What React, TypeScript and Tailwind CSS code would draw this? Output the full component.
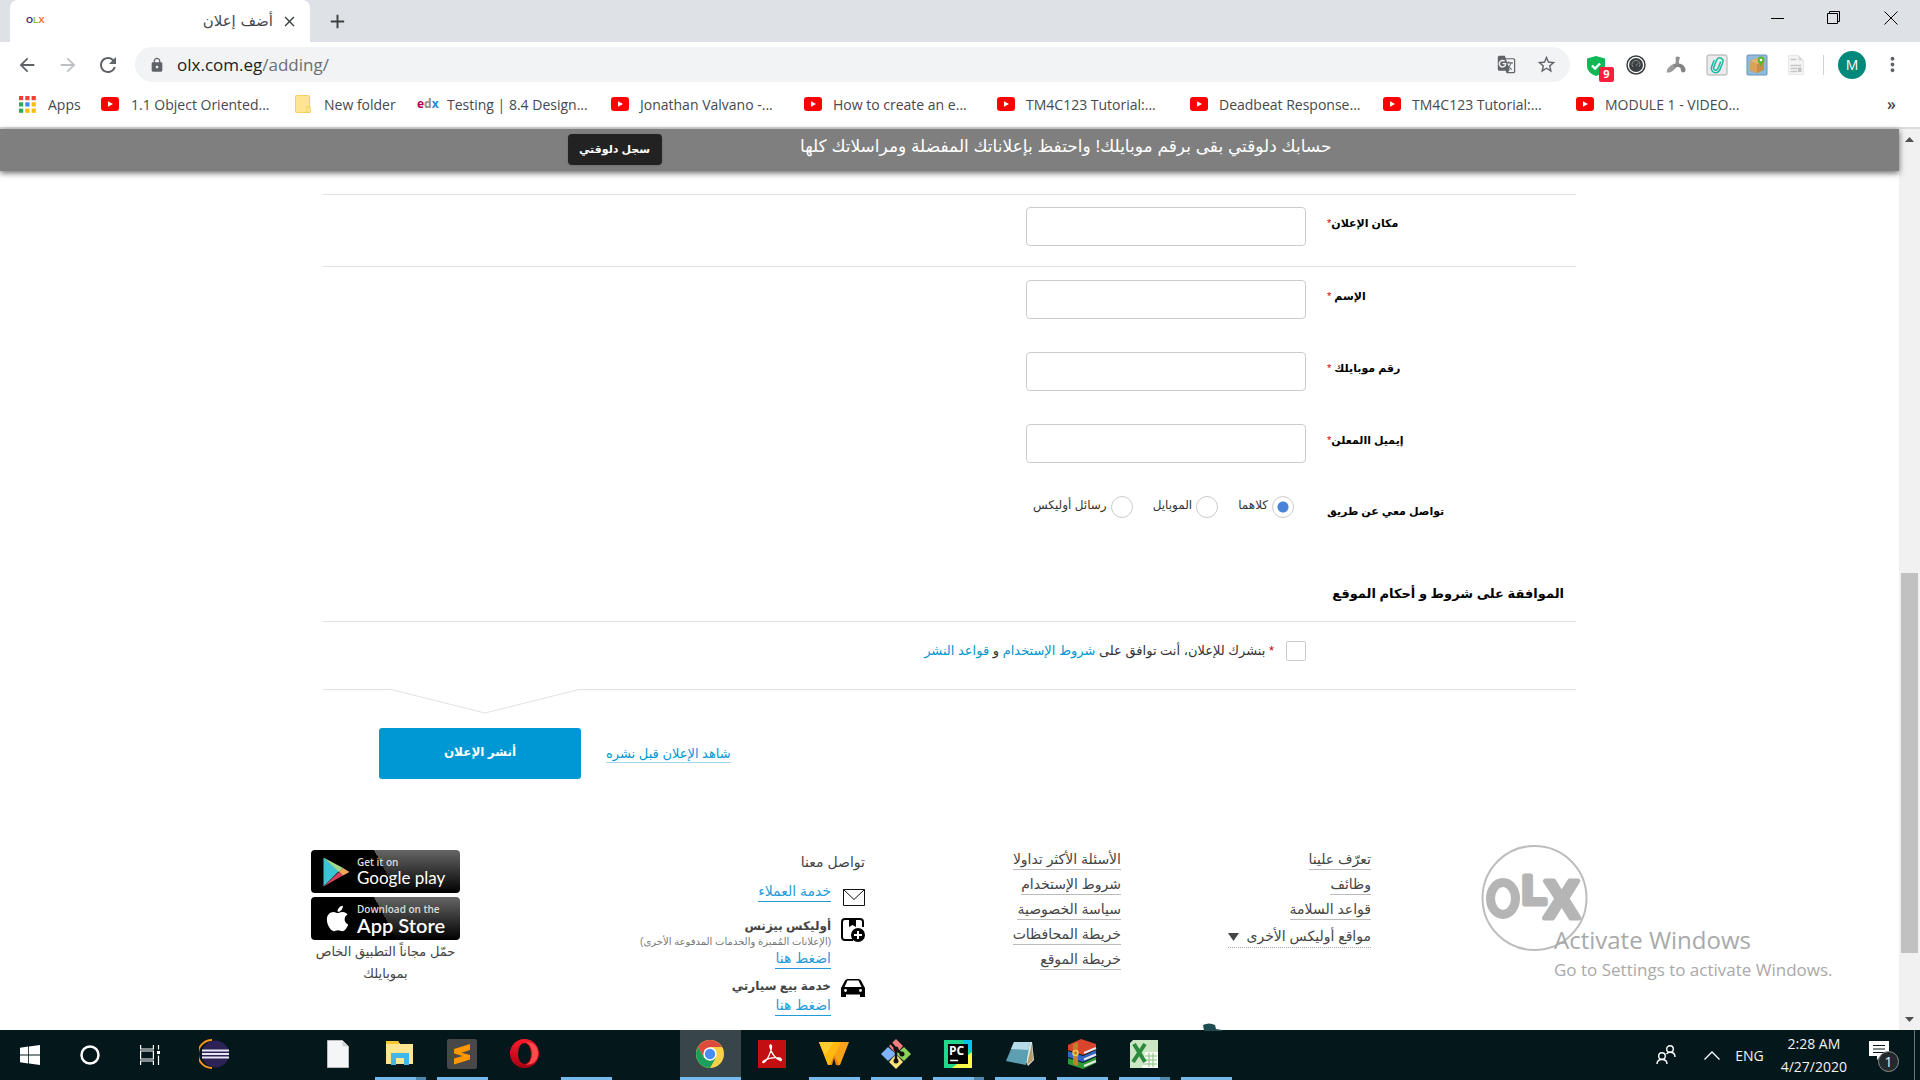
import React, { useState } from "react";
import {
  MdArrowBack,
  MdArrowForward,
  MdRefresh,
  MdLock,
  MdStarBorder,
  MdGTranslate,
  MdMoreVert,
  MdClose,
  MdAdd,
} from "react-icons/md";
import { FaApple } from "react-icons/fa";

const uiFont = "font-['Open_Sans','Noto_Sans',sans-serif]";
const pageFont = "font-['Liberation_Sans','DejaVu_Sans',sans-serif]";

function YouTubeIcon() {
  return (
    <svg width="18" height="14" viewBox="0 0 18 14" className="shrink-0">
      <rect width="18" height="14" rx="3" fill="#ff0000" />
      <path d="M7 4.2v5.6L12 7z" fill="#fff" />
    </svg>
  );
}

function AppsIcon() {
  const colors = ["#ea4335", "#ea4335", "#ea4335", "#34a853", "#4285f4", "#fbbc05", "#34a853", "#fbbc05", "#fbbc05"];
  return (
    <svg width="17" height="17" viewBox="0 0 17 17" className="shrink-0">
      {colors.map((c, i) => (
        <rect key={i} x={(i % 3) * 6.3} y={Math.floor(i / 3) * 6.3} width="4.2" height="4.2" fill={c} />
      ))}
    </svg>
  );
}

function FolderIcon() {
  return (
    <svg width="16" height="18" viewBox="0 0 16 18" className="shrink-0">
      <rect x="0.5" y="0.5" width="14" height="17" rx="1" fill="#ffe591" stroke="#f3cf63" />
      <path d="M12 11.5h3.2v6H12z" fill="#ffe591" stroke="#f3cf63" />
    </svg>
  );
}

function EdxIcon() {
  return (
    <span className="w-[20px] shrink-0 text-[12px] leading-none font-bold">
      <span className="text-[#b5005b]">e</span>
      <span className="text-[#8b8b8b]">d</span>
      <span className="text-[#1a8fe0]">x</span>
    </span>
  );
}

function TabStrip() {
  return (
    <div className="flex h-[42px] items-stretch bg-[#dee1e6]">
      <div className="ml-[10px] flex w-[300px] items-center rounded-t-lg bg-white pr-[10px] pl-4">
        <span className="font-['Liberation_Sans',sans-serif] text-[9px] font-extrabold">
          <span className="text-[#4b1a82]">O</span>
          <span className="text-[#8cc43f]">L</span>
          <span className="text-[#f5690c]">X</span>
        </span>
        <span dir="rtl" className="ml-auto font-['DejaVu_Sans',sans-serif] text-[15px] text-[#45494d]">
          أضف إعلان
        </span>
        <button aria-label="Close tab" className="ml-1.5 p-0.5 text-[#3c4043]">
          <MdClose size={17} />
        </button>
      </div>
      <button aria-label="New tab" className="ml-4 text-[#3c4043]">
        <MdAdd size={23} />
      </button>
      <div className="ml-auto flex text-black">
        <button aria-label="Minimize" className="flex w-[56px] items-center justify-center pb-[6px]">
          <svg width="13" height="13" viewBox="0 0 13 13"><path d="M0 6.5h13" stroke="currentColor" /></svg>
        </button>
        <button aria-label="Restore" className="flex w-[57px] items-center justify-center pb-[6px]">
          <svg width="14" height="14" viewBox="0 0 14 14" fill="none" stroke="currentColor">
            <path d="M0.5 2.5h10v10h-10zM2.5 2.5v-2h10v10h-2" />
          </svg>
        </button>
        <button aria-label="Close" className="flex w-[58px] items-center justify-center pb-[6px]">
          <svg width="14" height="14" viewBox="0 0 14 14"><path d="M0.5 0.5l13 13M13.5 0.5l-13 13" stroke="currentColor" /></svg>
        </button>
      </div>
    </div>
  );
}

function Toolbar() {
  return (
    <div className="flex h-[45px] items-center bg-white">
      <button aria-label="Back" className="flex w-[54px] justify-center text-[#5f6368]"><MdArrowBack size={22} /></button>
      <button aria-label="Forward" className="flex w-[27px] justify-center text-[#bdc1c6]"><MdArrowForward size={22} /></button>
      <button aria-label="Reload" className="flex w-[54px] justify-center text-[#5f6368]"><MdRefresh size={24} /></button>
      <div className="flex h-[35px] flex-1 items-center rounded-full bg-[#f1f3f4] pr-[13px] pl-[14px] text-[#5f6368]">
        <MdLock size={16} />
        <span className="ml-3 text-[17px] text-[#6b6f73]">
          <span className="text-[#202124]">olx.com.eg</span>/adding/
        </span>
        <button aria-label="Translate" className="ml-auto"><MdGTranslate size={19} /></button>
        <button aria-label="Bookmark" className="ml-5"><MdStarBorder size={21} /></button>
      </div>
      <div className="flex items-center pl-4">
        <div className="relative flex w-[38px] pt-0.5">
          <svg width="20" height="20" viewBox="0 0 20 20">
            <path d="M1 2.5L10 0l9 2.500v7.500c0 4.500-3.500 8-9 10-5.500-2-9-5.500-9-10z" fill="#10b955" />
            <path d="M6 9.500l3 3 5-5" fill="none" stroke="#fff" strokeWidth="2.400" />
          </svg>
          <span className="absolute top-[13px] left-[13px] flex h-[15px] w-[15px] items-center justify-center rounded-[2px] bg-[#fa1e3e] text-[11px] font-bold text-white">
            9
          </span>
        </div>
        <div className="w-[40px] pl-0.5">
          <svg width="20" height="20" viewBox="0 0 20 20">
            <circle cx="10" cy="10" r="9" fill="#fff" stroke="#3c3f42" strokeWidth="1.500" />
            <circle cx="10" cy="10" r="7" fill="#3c3f42" />
            <path d="M7 12a4 4 0 1 1 6 0M10 11l2-3" fill="none" stroke="#85898c" />
          </svg>
        </div>
        <div className="w-[40px] pl-0.5">
          <svg width="20" height="20" viewBox="0 0 20 20">
            <path d="M0.500 17.500Q1 12 8 8.500L11 12Q6 17 3.500 17.500z" fill="#9c9c9c" />
            <path d="M8 9Q17 7 19.500 14Q20 17.500 16.500 17.500Q14.500 16 14.500 13Q12 11 8 12z" fill="#828282" />
            <path d="M9.500 2.500Q11.500 0.500 14 2.500Q12.500 5.500 13 9.500L9 10Q10.500 6 9.500 2.500z" fill="#919191" />
          </svg>
        </div>
        <div className="w-[40px] pl-0.5">
          <svg width="22" height="22" viewBox="0 0 22 22" fill="none">
            <rect x="1" y="1" width="20" height="20" rx="1.500" fill="#ebebeb" stroke="#aaa" />
            <g transform="rotate(22 11 11)" stroke="#1ab9a4" strokeWidth="1.500" strokeLinecap="round">
              <path d="M13.200 7v7.200a2.200 2.200 0 0 1-4.400 0V6.500a3.300 3.300 0 0 1 6.600 0v8a4.400 4.400 0 0 1-8.800 0V8" />
            </g>
          </svg>
        </div>
        <div className="w-[40px] pl-0.5">
          <svg width="22" height="22" viewBox="0 0 22 22">
            <rect x="1" y="1" width="20" height="20" rx="1" fill="#90b9da" stroke="#6896bd" />
            <path d="M4 7l7-3 7 3v9l-7 3-7-3z" fill="#c98d45" />
            <path d="M4 7l7 3 7-3-7-3z" fill="#e5b573" />
            <path d="M4 7l7 3v9l-7-3z" fill="#dba25a" />
            <circle cx="15" cy="6" r="3.500" fill="#5fb62e" />
            <circle cx="15" cy="6" r="1.300" fill="#fff" />
            <path d="M13.500 9h3L15 13z" fill="#5fb62e" />
          </svg>
        </div>
        <div className="w-[39px] pl-1">
          <svg width="16" height="20" viewBox="0 0 16 20">
            <path d="M0.500 0.500h10l5 5v14h-15z" fill="#f5f5f5" stroke="#e6e6e6" />
            <path d="M10.500 0.500v5h5z" fill="#d9d9d9" />
            <path d="M2.500 4.500h6M2.500 10.500h11M2.500 13.500h7M2.500 16.500h7" stroke="#c6c6c6" strokeWidth="1.500" />
            <rect x="10" y="12.500" width="3.500" height="4.500" fill="#c2c2c2" />
          </svg>
        </div>
        <span className="h-5 w-px bg-[#cfd1d4]" />
        <button className="ml-[14px] flex h-7 w-7 items-center justify-center rounded-full bg-[#00897b] text-[14px] text-white">M</button>
        <button aria-label="Menu" className="mr-4 ml-[15px] text-[#5f6368]"><MdMoreVert size={23} /></button>
      </div>
    </div>
  );
}

const videoBookmarks = [
  "Jonathan Valvano -...",
  "How to create an e...",
  "TM4C123 Tutorial:...",
  "Deadbeat Response...",
  "TM4C123 Tutorial:...",
  "MODULE 1 - VIDEO...",
];

function BookmarksBar() {
  return (
    <nav className="flex h-[42px] items-center border-b-2 border-[#dadce0] bg-white pb-[6px] pl-[19px] text-[14px] whitespace-nowrap text-[#45494d]">
      <a href="#" className="flex w-[82px] shrink-0 items-center gap-[12px]"><AppsIcon />Apps</a>
      <a href="#" className="flex w-[194px] shrink-0 items-center gap-[12px]"><YouTubeIcon />1.1 Object Oriented...</a>
      <a href="#" className="flex w-[122px] shrink-0 items-center gap-[13px]"><FolderIcon />New folder</a>
      <a href="#" className="flex w-[194px] shrink-0 items-center gap-[10px]"><EdxIcon />Testing | 8.4 Design...</a>
      {videoBookmarks.map((t, i) => (
        <a key={i} href="#" className="flex w-[193px] shrink-0 items-center gap-[11px]"><YouTubeIcon />{t}</a>
      ))}
      <button aria-label="More bookmarks" className="mr-6 ml-auto text-[16px] font-semibold">»</button>
    </nav>
  );
}

function PromoBanner() {
  return (
    <div className="relative z-10 h-[42px] bg-[#7f7f7f] shadow-[0_2px_6px_rgba(0,0,0,0.6)]">
      <div dir="rtl" className="mx-auto flex w-[764px] items-start justify-between pt-[5px]">
        <p className="text-[17px] leading-[26px] whitespace-nowrap text-white">
          حسابك دلوقتي بقى برقم موبايلك! واحتفظ بإعلاناتك المفضلة ومراسلاتك كلها
        </p>
        <button className="h-[31px] w-[94px] rounded bg-[#222] text-[11px] font-bold whitespace-nowrap text-white shadow">
          سجل دلوقتي
        </button>
      </div>
    </div>
  );
}

function Field({ id, label, star }: { id: string; label: string; star: string }) {
  return (
    <div dir="rtl" className="flex h-[72px] items-start gap-[21px]">
      <label htmlFor={id} className="w-[249px] pt-[6px] text-left text-[11px] leading-5 font-bold text-black">
        {label}
        <span className="font-normal text-[#c00]">{star}</span>
      </label>
      <input id={id} type="text" className="h-[39px] w-[280px] rounded-[4px] border border-[#ccc] px-2 text-sm outline-none" />
    </div>
  );
}

const contactOptions = ["كلاهما", "الموبايل", "رسائل أوليكس"];

function ContactMethod() {
  const [value, setValue] = useState(0);
  return (
    <div dir="rtl" role="radiogroup" aria-labelledby="contact-method" className="flex h-[72px] items-start gap-[21px]">
      <span id="contact-method" className="w-[249px] pt-[5px] text-left text-[11px] leading-5 font-bold text-black">
        تواصل معي عن طريق
      </span>
      <div className="flex gap-5 pr-3">
        {contactOptions.map((t, i) => (
          <label key={t} className="flex items-start gap-1 text-[12px] leading-[18px] text-[#333]">
            <input
              type="radio"
              name="contact"
              checked={value === i}
              onChange={() => setValue(i)}
              className="h-[22px] w-[22px] appearance-none rounded-full border border-[#ccc] bg-white checked:bg-[radial-gradient(circle,#4683d9_5px,#fff_6px)]"
            />
            {t}
          </label>
        ))}
      </div>
    </div>
  );
}

function AdForm() {
  const [agreed, setAgreed] = useState(false);
  return (
    <form className="mx-auto w-full max-w-[1253px] pt-[23px]">
      <div className="h-[72px] border-t border-[#e2e2e2] pt-3">
        <Field id="location" label="مكان الإعلان" star="*" />
      </div>
      <div className="border-t border-[#e2e2e2] pt-[13px]">
        <Field id="name" label="الإسم" star=" *" />
        <Field id="phone" label="رقم موبايلك" star=" *" />
        <Field id="email" label="إيميل االمعلن" star="*" />
        <ContactMethod />
      </div>
      <h2 dir="rtl" className="h-[53px] pt-[12px] pr-3 text-[13px] leading-7 font-bold text-black">
        الموافقة على شروط و أحكام الموقع
      </h2>
      <div dir="rtl" className="flex h-[68px] items-start border-t border-[#e2e2e2] pt-[19px] pr-[270px]">
        <input
          id="agree"
          type="checkbox"
          checked={agreed}
          onChange={() => setAgreed(!agreed)}
          className="h-5 w-5 appearance-none rounded-[2px] border border-[#ccc] bg-white checked:bg-[#0098d0]"
        />
        <label htmlFor="agree" className="pr-3 text-[13px] leading-5 text-[#333]">
          <span className="text-[#c00]">*</span> بنشرك للإعلان، أنت توافق على{" "}
          <a href="#" className="text-[#0098d0]">شروط الإستخدام</a> و <a href="#" className="text-[#0098d0]">قواعد النشر</a>
        </label>
      </div>
      <div className="flex">
        <span className="w-[68px] border-t border-[#e2e2e2]" />
        <svg width="188" height="25" viewBox="0 0 188 25" fill="none">
          <path d="M0 0.500L94 24L188 0.500" stroke="#e2e2e2" />
        </svg>
        <span className="flex-1 border-t border-[#e2e2e2]" />
      </div>
      <div className="mt-[14px] flex items-center gap-[25px] pl-[56px]">
        <button type="button" className="h-[51px] w-[202px] rounded-[3px] bg-[#0098d4] pb-1 text-[12px] font-bold text-white">
          أنشر الإعلان
        </button>
        <a href="#" dir="rtl" className="border-b border-[#a6d8f0] text-[13px] leading-[17px] text-[#0098d4]">
          شاهد الإعلان قبل نشره
        </a>
      </div>
    </form>
  );
}

function StoreBadge({ top, name, icon, nameClass }: { top: string; name: string; icon: React.ReactNode; nameClass: string }) {
  return (
    <a
      href="#"
      className="flex h-[43px] w-[149px] items-center rounded-[4px] bg-black bg-[linear-gradient(62deg,#000_50%,transparent_50%),linear-gradient(180deg,#666_0%,#000_100%)] pl-3 text-white"
    >
      <span className="w-[34px]">{icon}</span>
      <span className="flex flex-col">
        <span className="font-['Open_Sans',sans-serif] text-[10px] leading-[12px] font-semibold whitespace-nowrap text-[#ddd]">{top}</span>
        <span className={nameClass}>{name}</span>
      </span>
    </a>
  );
}

function AppDownloads() {
  return (
    <div className="w-[149px] pt-[5px]">
      <div className="flex flex-col gap-1">
        <StoreBadge
          top="Get it on"
          name="Google play"
          nameClass="font-['Lato',sans-serif] text-[17px] leading-[20px] whitespace-nowrap"
          icon={
            <svg width="27" height="30" viewBox="0 0 27 30">
              <path d="M0.500 0.500v29L16 14z" fill="#3bc4d6" />
              <path d="M0.500 0.500L20 11l-4 4z" fill="#a4d98b" />
              <path d="M0.500 29.500L16 15l4 3.500z" fill="#d93f5b" />
              <path d="M20 11l6.500 4L20 18.500 16 14.800z" fill="#f5a55c" />
            </svg>
          }
        />
        <StoreBadge
          top="Download on the"
          name="App Store"
          nameClass="font-['Lato',sans-serif] text-[20px] leading-[20px] font-semibold whitespace-nowrap"
          icon={<FaApple size={29} />}
        />
      </div>
      <p dir="rtl" className="mt-[1px] text-center text-[13px] leading-[22px] whitespace-nowrap text-[#444]">
        حمّل مجاناً التطبيق الخاص
        <br />
        بموبايلك
      </p>
    </div>
  );
}

function FooterLinks({ links, children }: { links: string[]; children?: React.ReactNode }) {
  return (
    <ul dir="rtl" className="flex flex-col items-start gap-[6px] pt-[6px] text-[14px] leading-[19px] whitespace-nowrap text-[#444]">
      {links.map((t) => (
        <li key={t}>
          <a href="#" className="block h-[19px] border-b border-[#bbb] leading-[17px]">{t}</a>
        </li>
      ))}
      {children}
    </ul>
  );
}

function Contact() {
  return (
    <div dir="rtl" className="pt-2 text-[14px] whitespace-nowrap text-[#444]">
      <p className="leading-[18px]">تواصل معنا</p>
      <div className="mt-[10px] flex gap-3">
        <svg width="22" height="17" viewBox="0 0 22 17" fill="#fff" stroke="#111" className="mt-2">
          <path d="M0.500 0.500h21v16h-21zM0.500 0.500L11 10.500L21.500 0.500" />
        </svg>
        <a href="#" className="mt-px h-[20px] border-b border-[#1f9bd8] leading-[18px] text-[#1f9bd8]">خدمة العملاء</a>
      </div>
      <div className="mt-[10px] flex gap-[10px]">
        <svg width="24" height="24" viewBox="0 0 24 24" fill="none" stroke="#000" strokeWidth="2" className="mt-0.5">
          <path d="M12 22H4q-3 0-3-3V4q0-3 3-3h15q3 0 3 3v5" />
          <path d="M8 1h7v8l-3.500-2L8 9z" fill="#000" stroke="none" />
          <circle cx="17" cy="17" r="7" fill="#000" stroke="none" />
          <path d="M17 13v8M13 17h8" stroke="#fff" />
        </svg>
        <div>
          <p className="text-[12px] leading-[20px] font-bold">أوليكس بيزنس</p>
          <p className="text-[10px] leading-[12px] text-[#777]">(الإعلانات المُميزة والخدمات المدفوعة الأخرى)</p>
          <a href="#" className="inline-block h-[19px] border-b border-[#1f9bd8] leading-[17px] text-[#1f9bd8]">اضغط هنا</a>
        </div>
      </div>
      <div className="mt-2 flex gap-[10px]">
        <svg width="24" height="18" viewBox="0 0 24 18" className="mt-0.5">
          <path d="M0 9l4-7.500Q5 0 6.500 0h11Q19 0 20 1.500L24 9v9h-5v-2.500H5V18H0z" fill="#000" />
          <path d="M6.500 1.500h11L20.500 8h-17z" fill="#fff" />
          <circle cx="4.500" cy="11.500" r="1.400" fill="#fff" />
          <circle cx="19.500" cy="11.500" r="1.400" fill="#fff" />
        </svg>
        <div>
          <p className="text-[12px] leading-[18px] font-bold">خدمة بيع سيارتي</p>
          <a href="#" className="inline-block h-[19px] border-b border-[#1f9bd8] leading-[17px] text-[#1f9bd8]">اضغط هنا</a>
        </div>
      </div>
    </div>
  );
}

function OlxLogo() {
  return (
    <svg width="107" height="107" viewBox="0 0 107 107" role="img" aria-label="OLX">
      <circle cx="53.500" cy="53" r="52" fill="none" stroke="#bdbdbd" strokeWidth="2" />
      <ellipse cx="22" cy="53.500" rx="12.500" ry="16" fill="none" stroke="#b5b5b5" strokeWidth="9" />
      <g fill="#b5b5b5" stroke="#b5b5b5" strokeLinejoin="round" fontFamily="Liberation Sans" fontWeight="700">
        <text x="41" y="59" fontSize="40" strokeWidth="5">L</text>
        <text x="63" y="73" fontSize="53" strokeWidth="5">X</text>
      </g>
    </svg>
  );
}

function SiteFooter() {
  return (
    <footer className="mx-auto mt-[66px] flex w-full max-w-[1277px] items-start">
      <AppDownloads />
      <div className="flex w-[405px] justify-end"><Contact /></div>
      <div className="flex w-[256px] justify-end">
        <FooterLinks links={["الأسئلة الأكثر تداولا", "شروط الإستخدام", "سياسة الخصوصية", "خريطة المحافظات", "خريطة الموقع"]} />
      </div>
      <div className="flex w-[250px] justify-end">
        <FooterLinks links={["تعرّف علينا", "وظائف", "قواعد السلامة"]}>
          <li>
            <button className="flex h-[22px] items-center gap-2 border-b border-dotted border-[#aaa]">
              مواقع أوليكس الأخرى
              <svg width="11" height="8" viewBox="0 0 11 8"><path d="M0 0h11L5.500 8z" fill="#444" /></svg>
            </button>
          </li>
        </FooterLinks>
      </div>
      <div className="ml-auto"><OlxLogo /></div>
    </footer>
  );
}

function Scrollbar() {
  return (
    <div className="flex w-[21px] flex-col items-center justify-between bg-[#f1f1f1] py-2">
      <svg width="9" height="5" viewBox="0 0 9 5"><path d="M0 5L4.500 0L9 5z" fill="#505050" /></svg>
      <span className="mt-[366px] h-[380px] w-[17px] bg-[#c1c1c1]" />
      <svg width="9" height="5" viewBox="0 0 9 5"><path d="M0 0h9L4.500 5z" fill="#505050" /></svg>
    </div>
  );
}

function ActivateNotice() {
  return (
    <div className="absolute top-[794px] left-[1554px] whitespace-nowrap text-[#a9a9a9]">
      <p className="text-[24px] leading-[34px]">Activate Windows</p>
      <p className="text-[17px] leading-[26px]">Go to Settings to activate Windows.</p>
    </div>
  );
}

type Task = { name: string; running?: boolean; active?: boolean; stacked?: boolean; icon?: React.ReactNode };

const tasks: Task[] = [
  {
    name: "Eclipse",
    icon: (
      <svg width="30" height="30" viewBox="0 0 30 30">
        <path d="M13 1A14 14 0 0 0 13 29" fill="none" stroke="#f7941e" strokeWidth="2" />
        <circle cx="16.500" cy="15" r="13.500" fill="#2c2255" />
        <path d="M3 11.500h27M3 15h27M3 18.500h27" stroke="#e8e6f2" strokeWidth="2" />
      </svg>
    ),
  },
  { name: "" },
  {
    name: "Document",
    icon: (
      <svg width="22" height="28" viewBox="0 0 22 28">
        <path d="M0.500 0.500h15l6 6v21h-21z" fill="#f4f5f6" stroke="#bbb" />
        <path d="M15.500 0.500v6h6z" fill="#cfd2d4" />
      </svg>
    ),
  },
  {
    name: "File Explorer",
    running: true,
    stacked: true,
    icon: (
      <svg width="28" height="25" viewBox="0 0 28 25">
        <path d="M0 0h12l2 3h13v20H0z" fill="#ffe693" />
        <path d="M0 0h12l2 3H0z" fill="#f8c533" />
        <path d="M5 24V12h18v12h-5v-7h-8v7z" fill="#3fb5e8" />
      </svg>
    ),
  },
  {
    name: "Sublime Text",
    running: true,
    icon: (
      <svg width="30" height="30" viewBox="0 0 30 30">
        <rect width="30" height="30" rx="2" fill="#484848" />
        <path d="M7 10l16-5v6l-8.500 2.700L23 16v4.500L7 25.500v-6l8.500-2.500L7 14.500z" fill="#ff9800" />
      </svg>
    ),
  },
  {
    name: "Opera",
    icon: (
      <svg width="29" height="29" viewBox="0 0 29 29">
        <defs>
          <linearGradient id="opera" x1="0" x2="0" y1="0" y2="1">
            <stop offset="0" stopColor="#ff1b2d" />
            <stop offset="1" stopColor="#a70014" />
          </linearGradient>
        </defs>
        <circle cx="14.500" cy="14.500" r="14.500" fill="url(#opera)" />
        <path d="M16 3Q28 4 28 14.500T16 26Q22 23 22 14.500T16 3" fill="#ff4b4b" />
        <ellipse cx="14.500" cy="14.500" rx="6.500" ry="10.500" fill="#04171b" />
      </svg>
    ),
  },
  { name: "", running: true },
  { name: "" },
  {
    name: "Chrome",
    running: true,
    active: true,
    icon: (
      <svg width="28" height="28" viewBox="0 0 28 28">
        <circle cx="14" cy="14" r="14" fill="#fbd04b" />
        <path d="M1.900 7A14 14 0 0 1 26.100 7H14L8 17.500z" fill="#dd4b3e" />
        <path d="M1.900 7A14 14 0 0 0 14 28L20 17.500 8 17.500z" fill="#1a9f5c" />
        <circle cx="14" cy="14" r="6.700" fill="#fff" />
        <circle cx="14" cy="14" r="5.200" fill="#4b8bf4" />
      </svg>
    ),
  },
  {
    name: "Acrobat",
    icon: (
      <svg width="28" height="28" viewBox="0 0 28 28">
        <rect width="28" height="28" fill="#c40f12" />
        <path
          d="M5.500 22.500C9 21 13.500 12 13.500 6.500C13.500 4.500 11.500 4.500 12 7C13 13 18 19.500 22.500 20.500C24 20.500 23.500 18.500 21.500 18C16 17 9.500 18.500 5.500 21Q4 22.500 5.500 22.500z"
          fill="none"
          stroke="#fff"
          strokeWidth="1.400"
        />
      </svg>
    ),
  },
  {
    name: "Player",
    running: true,
    icon: (
      <svg width="30" height="24" viewBox="0 0 30 24">
        <path d="M0 0h30l-9 23h-2L15 15l-4 8H9z" fill="#f9a11b" />
        <path d="M0 0h22L11 23H9z" fill="#ffb90f" />
        <path d="M0 0h15l-9 13z" fill="#ffcb2e" />
        <path d="M15 13l5 10-1 1-4-9z" fill="#e86a10" />
        <path d="M11 23l4-10 4 10h-2l-2-7-2 7z" fill="#f08a12" />
      </svg>
    ),
  },
  {
    name: "Git",
    running: true,
    icon: (
      <svg width="30" height="30" viewBox="0 0 30 30">
        <path d="M15 0l7 7-7 8-7-8z" fill="#f47e7e" />
        <path d="M23 8l7 7-7 7-8-7z" fill="#8bd05b" />
        <path d="M15 15l7 8-7 7-7-7z" fill="#ffe27a" />
        <path d="M7 8l8 7-8 7-7-7z" fill="#80b3ff" />
        <path d="M10 4l5 6v12M15 10l6 5" fill="none" stroke="#111" strokeWidth="2.500" />
        <circle cx="15" cy="10" r="2.500" fill="#111" />
        <circle cx="15" cy="22" r="2.500" fill="#111" />
        <circle cx="21" cy="15" r="2.500" fill="#111" />
      </svg>
    ),
  },
  {
    name: "PyCharm",
    running: true,
    stacked: true,
    icon: (
      <svg width="28" height="28" viewBox="0 0 28 28">
        <path d="M0 0h28v28H0z" fill="#21d789" />
        <path d="M18 0h10v14z" fill="#07c3f2" />
        <path d="M28 12v16H8z" fill="#fcf84a" />
        <rect x="4" y="4" width="20" height="20" fill="#000" />
        <text x="5" y="15" fontSize="12" fontWeight="700" fill="#fff" fontFamily="Open Sans">PC</text>
        <path d="M6 20.500h8" stroke="#fff" strokeWidth="1.500" />
      </svg>
    ),
  },
  {
    name: "Notepad",
    running: true,
    icon: (
      <svg width="28" height="26" viewBox="0 0 28 26">
        <path d="M10 1h16l2 18-6 6z" fill="#d9e6ea" />
        <path d="M8 1h16l-4 23L0 20z" fill="#5c9fb3" />
        <path d="M8 1h16l-1.500 8L5 8z" fill="#b6dbe6" />
        <path d="M26 2l1 17-6 5z" fill="#b89a62" />
      </svg>
    ),
  },
  {
    name: "WinRAR",
    running: true,
    icon: (
      <svg width="29" height="30" viewBox="0 0 29 30">
        <path d="M0 6l13-6 15 5v5l-13 6L0 11z" fill="#d9452c" />
        <path d="M0 12l15 5 13-6v6l-13 6L0 18z" fill="#3465c4" />
        <path d="M0 19l15 5 13-6v6l-13 6L0 25z" fill="#2c9c35" />
        <path d="M16 14l12-5M16 20.500l12-5M16 27l12-5" stroke="#e9e9e9" strokeWidth="2" />
        <path d="M5 5l5-2v24l-5-1.500z" fill="#c07f2d" />
        <circle cx="7.500" cy="14" r="2.500" fill="none" stroke="#f1c65a" strokeWidth="1.500" />
      </svg>
    ),
  },
  {
    name: "Excel",
    running: true,
    stacked: true,
    icon: (
      <svg width="28" height="28" viewBox="0 0 28 28">
        <path d="M0 3l3-3h25v28H0z" fill="#cbe6c3" />
        <path d="M15 12h13v16H12z" fill="#f5faf4" />
        <path d="M15 16h12M14 20h13M13 24h14M19 13v14M23 13v14" stroke="#8cbf86" />
        <path d="M4 4l11 18M15 4L3 22" stroke="#2b8a3c" strokeWidth="4" />
      </svg>
    ),
  },
  { name: "", running: true },
];

function TaskButton({ task }: { task: Task }) {
  return (
    <button aria-label={task.name || "Window"} className="flex w-[62px] flex-col items-center">
      <span className={task.active ? "flex h-[47px] w-[61px] items-center justify-center bg-[#394649]" : "flex h-[47px] w-[61px] items-center justify-center"}>
        {task.icon}
      </span>
      {task.running && (
        <span className={task.active ? "flex h-[3px] w-[61px] bg-[#76b9ed]" : "flex h-[3px] w-[51px] bg-[#76b9ed]"}>
          {task.stacked && <span className="ml-auto w-[10px] bg-[#4f86ae]" />}
        </span>
      )}
    </button>
  );
}

function Taskbar() {
  return (
    <div className="relative flex h-[50px] items-stretch bg-[#04171b] text-[#f2f2f2]">
      <svg width="24" height="8" viewBox="0 0 24 8" className="absolute -top-[7px] left-[1200px]">
        <path d="M3 2q6-3 12 0l1 4 6 1v1H4z" fill="#1d4d50" />
      </svg>
      <button aria-label="Start" className="flex w-[60px] items-center justify-center">
        <svg width="20" height="20" viewBox="0 0 20 20" fill="#fff">
          <path d="M0 2.800l8.200-1.200v7.900H0zM9 1.500L20 0v9.500H9zM0 10.500h8.200v7.900L0 17.200zM9 10.500h11V20L9 18.500z" />
        </svg>
      </button>
      <button aria-label="Cortana" className="flex w-[60px] items-center justify-center">
        <svg width="20" height="20" viewBox="0 0 20 20"><circle cx="10" cy="10" r="8.500" fill="none" stroke="#fff" strokeWidth="2.500" /></svg>
      </button>
      <button aria-label="Task view" className="mr-[3px] flex w-[60px] items-center justify-center">
        <svg width="20" height="20" viewBox="0 0 20 20" fill="none" stroke="#fff" strokeWidth="1.200">
          <path d="M0.600 0v4h12.800V0M0.600 20v-4h12.800v4M0.600 6h12.800v8H0.600zM18.500 0v4.500M18.500 10.500v9.500" />
          <path d="M17 6h3v3h-3z" fill="#fff" stroke="none" />
        </svg>
      </button>
      {tasks.map((t, i) => (
        <TaskButton key={i} task={t} />
      ))}
      <div className="ml-auto flex items-center">
        <svg width="20" height="20" viewBox="0 0 20 20" fill="none" stroke="#fff" strokeWidth="1.400">
          <circle cx="14" cy="4" r="3.300" />
          <circle cx="6" cy="11" r="3.300" />
          <path d="M1 19q0-4.500 5-4.500T11 19M10.500 9Q12 7.300 14 7.300q5 0 5 4.700" />
        </svg>
        <svg width="16" height="9" viewBox="0 0 16 9" fill="none" stroke="#fff" strokeWidth="1.300" className="ml-7">
          <path d="M0.500 8.500L8 1l7.500 7.500" />
        </svg>
        <span className="ml-[15px] text-[14px]">ENG</span>
        <div className="ml-[17px] text-center text-[14px] leading-[23px]">
          <p>2:28 AM</p>
          <p>4/27/2020</p>
        </div>
        <button aria-label="Notifications" className="relative ml-[22px] h-8 w-[32px]">
          <svg width="20" height="20" viewBox="0 0 20 20" className="mb-2">
            <path d="M0 0h20v15h-8l-4 4v-4H0z" fill="#fff" />
            <path d="M4 4.500h12M4 8h12M4 11.500h12" stroke="#04171b" />
          </svg>
          <span className="absolute top-[12px] left-[9px] flex h-[21px] w-[21px] items-center justify-center rounded-full border border-[#8b8f90] bg-[#24292b] text-[14px]">
            1
          </span>
        </button>
        <span className="ml-[13px] h-[50px] w-px bg-[#6a7577]" />
        <span className="w-[5px]" />
      </div>
    </div>
  );
}

export default function App() {
  return (
    <div className={`flex min-h-screen flex-col bg-white ${uiFont}`}>
      <TabStrip />
      <Toolbar />
      <BookmarksBar />
      <div className="relative flex flex-1">
        <main className={`flex-1 ${pageFont}`}>
          <PromoBanner />
          <AdForm />
          <SiteFooter />
        </main>
        <Scrollbar />
        <ActivateNotice />
      </div>
      <Taskbar />
    </div>
  );
}
